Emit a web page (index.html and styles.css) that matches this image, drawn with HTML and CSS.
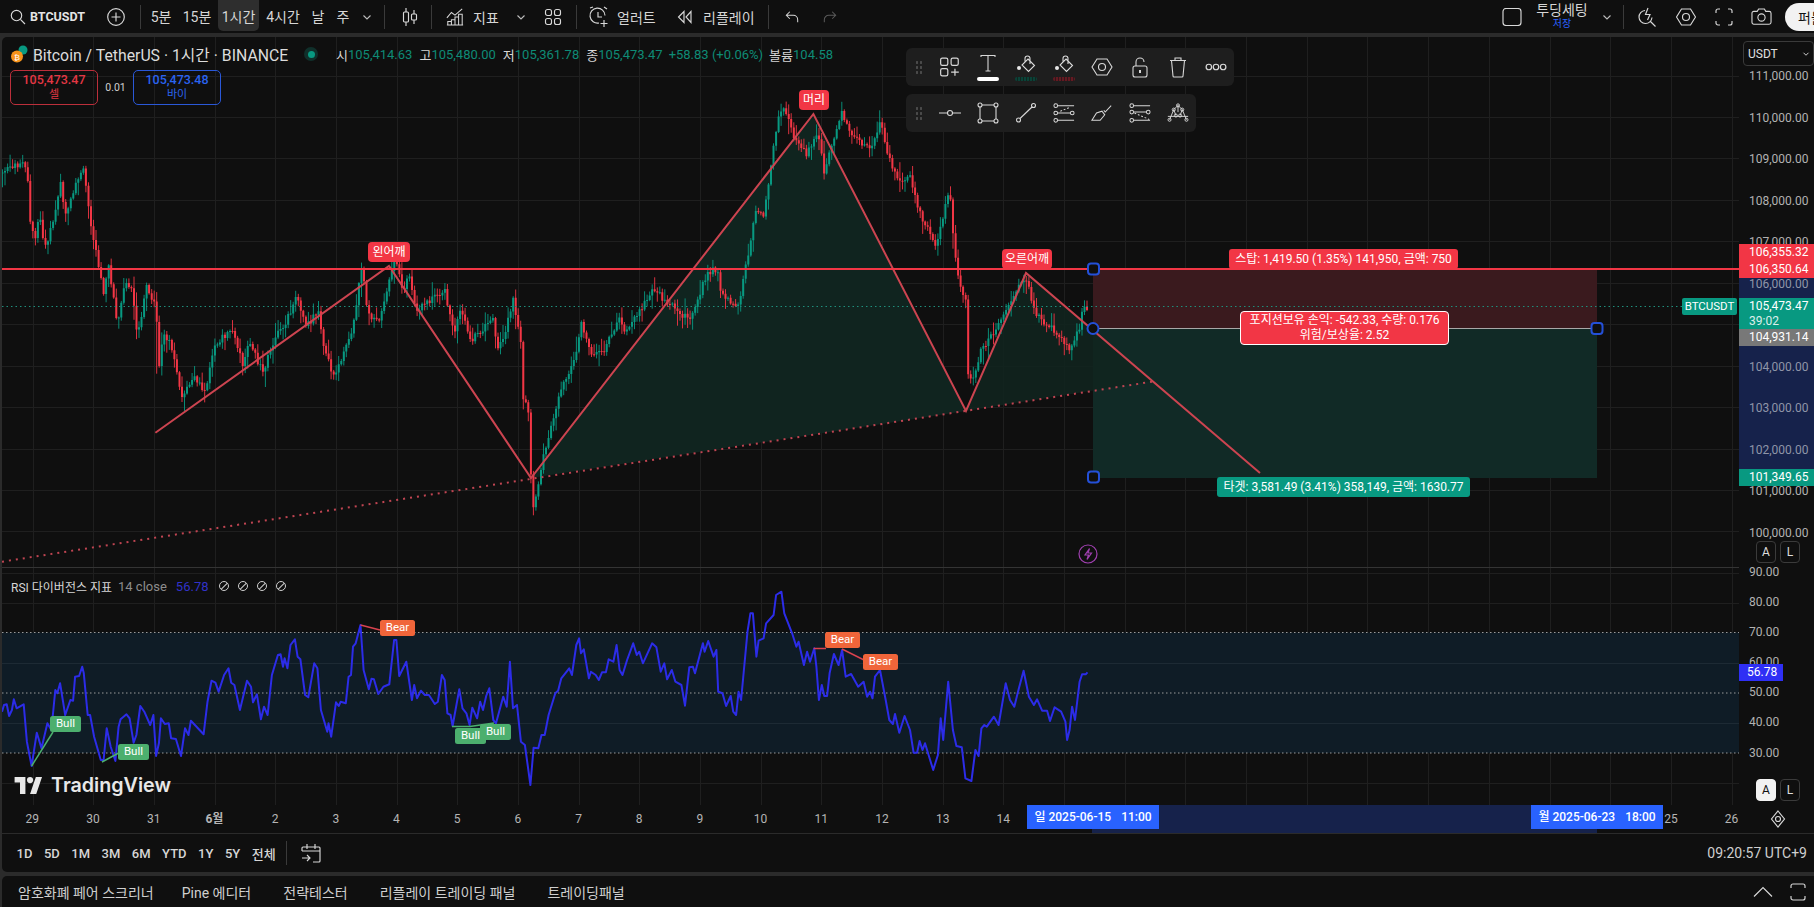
FILE: index.html
```html
<!DOCTYPE html>
<html lang="ko">
<head>
<meta charset="utf-8">
<title>BTCUSDT</title>
<link rel="stylesheet" href="styles.css">
</head>
<body>
<header class="topbar">
  <svg class="ico w16 ml10" viewBox="0 0 16 16"><circle cx="6.5" cy="6.5" r="5.2"/><path d="M10.4 10.4l4.6 4.6"/></svg>
  <span class="symbol">BTCUSDT</span>
  <svg class="ico w18 ml18" viewBox="0 0 18 18"><circle cx="9" cy="9" r="8.3"/><path d="M9 4.5v9M4.5 9h9"/></svg>
  <i class="vr ml15"></i>
  <button class="tf ml2 w36">5분</button>
  <button class="tf w36">15분</button>
  <button class="tf w41 ml3 active">1시간</button>
  <button class="tf w40 ml4">4시간</button>
  <button class="tf w26 ml2">날</button>
  <button class="tf w24">주</button>
  <svg class="chev ml6" viewBox="0 0 12 12"><path d="M2.5 4.5L6 8l3.5-3.5"/></svg>
  <i class="vr ml11"></i>
  <svg class="ico w16 ml17" viewBox="0 0 16 20"><path d="M4 1v4M4 15v4M12 3v4M12 13v4"/><rect x="1.5" y="5" width="5" height="10" rx="1"/><rect x="9.5" y="7" width="5" height="6" rx="1"/></svg>
  <i class="vr ml13"></i>
  <svg class="ico w18 ml14" viewBox="0 0 20 20"><path d="M1 11l5-6 4 3 8-7"/><path d="M2 19v-4h4v4M6 19v-6h4v6M10 19V10h4v9M14 19V7h4v12M1 19h18"/></svg>
  <span class="lbl w25 ml9">지표</span>
  <svg class="chev ml17" viewBox="0 0 12 12"><path d="M2.5 4.5L6 8l3.5-3.5"/></svg>
  <svg class="ico w18 ml17" viewBox="0 0 18 18"><rect x="1.5" y="1.5" width="6" height="6" rx="2"/><rect x="10.5" y="1.5" width="6" height="6" rx="2"/><rect x="1.5" y="10.5" width="6" height="6" rx="2"/><rect x="10.5" y="10.5" width="6" height="6" rx="2"/></svg>
  <i class="vr ml14"></i>
  <svg class="ico w20 ml12" viewBox="0 0 20 22"><path d="M16 9.5A7.5 7.5 0 1 0 10 17M9 6v5h4M1 2l3-1M15 1l3 2M15 14v7M11.5 17.5h7"/></svg>
  <span class="lbl w38 ml8">얼러트</span>
  <svg class="ico w16 ml22" viewBox="0 0 16 14"><path d="M7 1.5L1.500 7 7 12.500zM14 1.500L9 7l5 5.500z"/></svg>
  <span class="lbl w50 ml10">리플레이</span>
  <i class="vr ml15"></i>
  <svg class="ico w14 ml16" viewBox="0 0 16 16"><path d="M5.500 2L1.500 6l4 4M1.500 6h8a5 5 0 0 1 5 5v3"/></svg>
  <svg class="ico w14 ml24 dim" viewBox="0 0 16 16"><path d="M10.500 2l4 4-4 4M14.500 6h-8a5 5 0 0 0-5 5v3"/></svg>
  <svg class="ico w20 mlauto" viewBox="0 0 20 18"><rect x="1" y=".5" width="18" height="17" rx="3"/></svg>
  <div class="saved ml15"><span class="saved-name">투딩세팅</span><span class="saved-state">저장</span></div>
  <svg class="chev ml14" viewBox="0 0 12 12"><path d="M2.5 4.5L6 8l3.500-3.500"/></svg>
  <i class="vr ml10"></i>
  <svg class="ico w20 ml13" viewBox="0 0 20 20"><path d="M8 3.500a6.500 6.500 0 1 0 7 7M13 14l5.500 5.500M11 1L8.500 7.500H13L10.500 13"/></svg>
  <svg class="ico w20 ml19" viewBox="0 0 20 18"><path d="M5.500 1h9l5 8-5 8h-9l-5-8z"/><circle cx="10" cy="9" r="3.500"/></svg>
  <svg class="ico w18 ml19" viewBox="0 0 18 18"><path d="M1 5V3a2 2 0 0 1 2-2h2M13 1h2a2 2 0 0 1 2 2v2M17 13v2a2 2 0 0 1-2 2h-2M5 17H3a2 2 0 0 1-2-2v-2"/></svg>
  <svg class="ico w21 ml18" viewBox="0 0 22 18"><path d="M3 3.500h3.500L8 1h6l1.500 2.500H19a2 2 0 0 1 2 2V15a2 2 0 0 1-2 2H3a2 2 0 0 1-2-2V5.500a2 2 0 0 1 2-2z"/><circle cx="11" cy="10" r="3.800"/></svg>
  <button class="publish">퍼블</button>
</header>

<main class="chart">
  <div class="panes">
    <section class="pane-price">
      <div class="legend">
        <svg class="coin" viewBox="0 0 18 18"><circle cx="12" cy="5" r="4.500" fill="#089981"/><circle cx="6" cy="11.500" r="6" fill="#f7931a"/><text x="6" y="14.500" class="coin-b">₿</text></svg>
        <span class="title">Bitcoin / TetherUS · 1시간 · BINANCE</span>
        <span class="live"><i></i></span>
        <span class="k">시</span><span class="v">105,414.63</span>
        <span class="k sp">고</span><span class="v">105,480.00</span>
        <span class="k sp">저</span><span class="v">105,361.78</span>
        <span class="k sp">종</span><span class="v">105,473.47</span>
        <span class="v sp6">+58.83 (+0.06%)</span>
        <span class="k sp6">볼륨</span><span class="v">104.58</span>
      </div>
      <div class="trade">
        <div class="trade-btn sell"><b>105,473.47</b><span>셀</span></div>
        <span class="spread">0.01</span>
        <div class="trade-btn buy"><b>105,473.48</b><span>바이</span></div>
      </div>
    </section>
    <section class="pane-rsi">
      <div class="rsi-legend">
        <span class="rsi-name">RSI 다이버전스 지표</span>
        <span class="rsi-args">14 close</span>
        <span class="rsi-val">56.78</span>
        <span class="nulls"><i></i><i></i><i></i><i></i></span>
      </div>
    </section>
    <div class="time-axis">
      <span>29</span><span>30</span><span>31</span><span class="strong">6월</span><span>2</span><span>3</span><span>4</span><span>5</span><span>6</span><span>7</span><span>8</span><span>9</span><span>10</span><span>11</span><span>12</span><span>13</span><span>14</span><span></span><span></span><span>17</span><span>18</span><span>19</span><span>20</span><span>21</span><span>22</span><span></span><span></span><span>25</span><span>26</span>
    </div>
  </div>
  <aside class="axis">
    <div class="ticks-price">
      <span>111,000.00</span><span>110,000.00</span><span>109,000.00</span><span>108,000.00</span><span>107,000.00</span><span class="on-band">106,000.00</span><span></span><span class="on-band">104,000.00</span><span class="on-band">103,000.00</span><span class="on-band">102,000.00</span><span>101,000.00</span><span>100,000.00</span>
    </div>
    <div class="ticks-rsi">
      <span>90.00</span><span>80.00</span><span>70.00</span><span>60.00</span><span>50.00</span><span>40.00</span><span>30.00</span>
    </div>
  </aside>

  <svg id="canvas" class="canvas" viewBox="0 37 1814 796" xmlns="http://www.w3.org/2000/svg"></svg>

  <div class="axis-band"></div>
  <div class="usdt"><span>USDT</span><svg class="chev-s" viewBox="0 0 12 12"><path d="M3 4.500L6 7.500l3-3"/></svg></div>

  <span class="tag tag-left">왼어깨</span>
  <span class="tag tag-head">머리</span>
  <span class="tag tag-right">오른어깨</span>
  <span class="pos pos-stop">스탑: 1,419.50 (1.35%) 141,950, 금액: 750</span>
  <span class="pos pos-now">포지션보유 손익: -542.33, 수량: 0.176<br>위험/보상율: 2.52</span>
  <span class="pos pos-target">타겟: 3,581.49 (3.41%) 358,149, 금액: 1630.77</span>

  <span class="plabel p-a">106,355.32</span>
  <span class="plabel p-b">106,350.64</span>
  <span class="plabel p-c">105,473.47<em>39:02</em></span>
  <span class="plabel p-d">104,931.14</span>
  <span class="plabel p-e">101,349.65</span>
  <span class="plabel p-rsi">56.78</span>
  <span class="sym-tag">BTCUSDT</span>

  <span class="sig bull s1">Bull</span>
  <span class="sig bull s2">Bull</span>
  <span class="sig bull s3">Bull</span>
  <span class="sig bull s4">Bull</span>
  <span class="sig bear s5">Bear</span>
  <span class="sig bear s6">Bear</span>
  <span class="sig bear s7">Bear</span>

  <div class="tvlogo">
    <svg class="tvmark" viewBox="0 0 36 22"><path d="M14 22H7V7H0V0h14v22zM28 22h-8l7.500-22h8L28 22z"/><circle cx="20" cy="4" r="4"/></svg>
    <span>TradingView</span>
  </div>

  <svg class="bolt" viewBox="0 0 20 20"><circle cx="10" cy="10" r="9"/><path d="M11.500 4.500L7 11h3.500L9 15.500 13.500 9H10z"/></svg>
  <span class="al al1 al-a">A</span><span class="al al1 al-l">L</span>
  <span class="al al2 al-a on">A</span><span class="al al2 al-l">L</span>

  <div class="time-band"></div>
  <span class="time-tag t1">일 2025-06-15 <i>11:00</i></span>
  <span class="time-tag t2">월 2025-06-23 <i>18:00</i></span>
  <svg class="ico axis-gear" viewBox="0 0 16 18"><path d="M8 1l6.500 8L8 17 1.500 9z"/><circle cx="8" cy="9" r="2.500"/></svg>

  <div class="float float1">
    <span class="grip"></span>
    <span class="tool"><svg viewBox="0 0 20 20"><rect x="1.500" y="2" width="6.500" height="6.500" rx="1.500"/><rect x="11" y="2" width="6.500" height="6.500" rx="1.500"/><rect x="1.500" y="11.500" width="6.500" height="6.500" rx="1.500"/><path d="M14.500 11.500v6.500M11 14.750h7"/></svg></span>
    <span class="tool tool-up"><svg viewBox="0 0 20 22"><path d="M3 3V1.500h14V3M10 1.500V17M7.500 17h5"/></svg><i class="swatch white"></i></span>
    <span class="tool tool-up"><svg viewBox="0 0 22 22"><path d="M13 5l6.500 6.500-6 6L7 11zM10 8V4.500a2.500 2.500 0 0 1 5 0V10"/><circle cx="4" cy="14" r="2" class="solid"/></svg><i class="swatch green"></i></span>
    <span class="tool tool-up"><svg viewBox="0 0 22 22"><path d="M13 5l6.500 6.500-6 6L7 11zM10 8V4.500a2.500 2.500 0 0 1 5 0V10"/><circle cx="4" cy="14" r="2" class="solid"/></svg><i class="swatch red"></i></span>
    <span class="tool"><svg viewBox="0 0 22 20"><path d="M6 2h10l5 8-5 8H6l-5-8z"/><circle cx="11" cy="10" r="3.500"/></svg></span>
    <span class="tool"><svg viewBox="0 0 18 22"><rect x="2" y="10" width="14" height="11" rx="2"/><path d="M5 10V6a4 4 0 0 1 8 0"/><path d="M9 14v3" class="thick"/></svg></span>
    <span class="tool"><svg viewBox="0 0 18 22"><path d="M1 4.500h16M6 4.500V2h6v2.500M2.500 4.500L4 20a1 1 0 0 0 1 1h8a1 1 0 0 0 1-1l1.500-15.500"/></svg></span>
    <span class="tool"><svg viewBox="0 0 20 8"><circle cx="3.500" cy="4" r="2.500"/><circle cx="10" cy="4" r="2.500"/><circle cx="16.500" cy="4" r="2.500"/></svg></span>
  </div>
  <div class="float float2">
    <span class="grip"></span>
    <span class="tool"><svg viewBox="0 0 22 20"><path d="M0 10h8.500M13.500 10H22"/><circle cx="11" cy="10" r="2.500"/></svg></span>
    <span class="tool"><svg viewBox="0 0 22 20"><path d="M5 2h12M5 18h12M3 4v12M19 4v12"/><circle cx="3" cy="2" r="2"/><circle cx="19" cy="2" r="2"/><circle cx="3" cy="18" r="2"/><circle cx="19" cy="18" r="2"/></svg></span>
    <span class="tool"><svg viewBox="0 0 22 20"><path d="M5 15.500L17 4"/><circle cx="3.500" cy="17" r="2"/><circle cx="18.500" cy="2.500" r="2"/></svg></span>
    <span class="tool"><svg viewBox="0 0 24 20"><circle cx="3" cy="2" r="2"/><path d="M5 2h18M5 10h14M5 18h18" /><circle cx="3" cy="10" r="2"/><circle cx="21" cy="10" r="2"/><circle cx="3" cy="18" r="2"/><path d="M8 8l10-4" stroke-dasharray="2 2"/></svg></span>
    <span class="tool"><svg viewBox="0 0 24 20"><path d="M1 18h9l5-6-3-4-6 2-5 8zM14 7l1.500 2L22 2"/></svg></span>
    <span class="tool"><svg viewBox="0 0 24 20"><path d="M5 2h18M5 9h14M5 18h18"/><circle cx="3" cy="2" r="2"/><circle cx="3" cy="9" r="2"/><circle cx="21" cy="9" r="2"/><circle cx="3" cy="18" r="2"/><path d="M6 10l16 7" stroke-dasharray="2 2"/></svg></span>
    <span class="tool"><svg viewBox="0 0 26 22"><path d="M1 15h24M3 19l5-12 5-5 5 5 5 12M8 7l2.500 7M18 7l-2.500 7M13 2v8"/><circle cx="3" cy="19" r="1.800"/><circle cx="8" cy="7" r="1.800"/><circle cx="13" cy="2" r="1.800"/><circle cx="18" cy="7" r="1.800"/><circle cx="23" cy="19" r="1.800"/><circle cx="10.500" cy="14" r="1.800"/><circle cx="15.500" cy="14" r="1.800"/></svg></span>
  </div>
</main>

<footer class="rangebar">
  <button class="range">1D</button><button class="range">5D</button><button class="range">1M</button><button class="range">3M</button><button class="range">6M</button><button class="range">YTD</button><button class="range">1Y</button><button class="range">5Y</button><button class="range">전체</button>
  <i class="vr ml10"></i>
  <svg class="ico w20 ml14" viewBox="0 0 20 20"><path d="M1 8V5a1 1 0 0 1 1-1h16a1 1 0 0 1 1 1v13a1 1 0 0 1-1 1h-6M1 8h18M6 1v5M14 1v5M1 15h8M6 12l3 3-3 3"/></svg>
  <span class="clock">09:20:57 UTC+9</span>
</footer>

<nav class="tabs">
  <span class="tab-first">암호화폐 페어 스크리너</span><span>Pine 에디터</span><span>전략테스터</span><span>리플레이 트레이딩 패널</span><span>트레이딩패널</span>
  <svg class="ico w20 tabs-up" viewBox="0 0 20 12"><path d="M1 10.500l9-9 9 9"/></svg>
  <svg class="ico w16 tabs-max" viewBox="0 0 16 18"><path d="M1 5V3a2 2 0 0 1 2-2h10a2 2 0 0 1 2 2v2M15 13v2a2 2 0 0 1-2 2H3a2 2 0 0 1-2-2v-2"/></svg>
</nav>
<script src="app.js"></script>
</body>
</html>
```
FILE: styles.css
```css
* { box-sizing: border-box; }
html, body { margin: 0; height: 100%; overflow: hidden; }
body {
  width: 1814px; height: 907px; display: flex; flex-direction: column; gap: 4px;
  background: #2b2b2b; color: #d6d6d6;
  font: 14px Roboto, "Noto Sans CJK KR", sans-serif;
}
button { font: inherit; color: inherit; background: none; border: 0; padding: 0; }
svg { display: block; flex: none; }

.ico { fill: none; stroke: #d8d8d8; stroke-width: 1.15; }
.dim { stroke: #5b5b5b; }
.chev { width: 12px; height: 12px; fill: none; stroke: #bdbdbd; stroke-width: 1.1; }
.w14 { width: 14px; } .w16 { width: 16px; } .w18 { width: 18px; } .w20 { width: 20px; } .w21 { width: 21px; }
.ml2 { margin-left: 2px; } .ml3 { margin-left: 3px; } .ml4 { margin-left: 4px; } .ml6 { margin-left: 6px; }
.ml8 { margin-left: 8px; } .ml9 { margin-left: 9px; } .ml10 { margin-left: 10px; } .ml11 { margin-left: 11px; }
.ml12 { margin-left: 12px; } .ml13 { margin-left: 13px; } .ml14 { margin-left: 14px; } .ml15 { margin-left: 15px; }
.ml16 { margin-left: 16px; } .ml17 { margin-left: 17px; } .ml18 { margin-left: 18px; } .ml19 { margin-left: 19px; }
.ml22 { margin-left: 22px; } .ml24 { margin-left: 24px; }
.mlauto { margin-left: auto; }
.vr { display: block; width: 1px; height: 24px; background: #3a3a3a; flex: none; }

.topbar { height: 33px; flex: none; display: flex; align-items: center; background: #0f0f0f; }
.symbol { margin-left: 4px; width: 59px; font-weight: 700; font-size: 12.5px; color: #e4e4e4; white-space: nowrap; }
.tf { height: 31px; margin-bottom: 2px; text-align: center; border-radius: 0 0 5px 5px; white-space: nowrap; }
.tf.active { background: #2e2e2e; }
.w24 { width: 24px; } .w25 { width: 25px; } .w26 { width: 26px; } .w36 { width: 36px; }
.w38 { width: 38px; } .w40 { width: 40px; } .w41 { width: 41px; } .w50 { width: 50px; }
.lbl { white-space: nowrap; flex: none; }
.saved { width: 50px; display: flex; flex-direction: column; align-items: center; line-height: 12px; }
.saved-name { white-space: nowrap; height: 14px; margin-top: 1px; }
.saved-state { font-size: 10px; color: #2962ff; }
.publish { width: 60px; height: 28px; margin: 0 -31px 0 13px; background: #f2f2f2; color: #111; border-radius: 14px 0 0 14px; text-align: left; padding-left: 13px; white-space: nowrap; flex: none; overflow: hidden; }

.chart { position: relative; height: 796px; flex: none; margin-left: 2px; display: flex; background: #0f0f0f; border-radius: 5px 0 0 0; overflow: hidden; font-size: 12px; }
.panes { width: 1737px; display: flex; flex-direction: column; position: relative; z-index: 1; }
.pane-price { height: 530px; }
.pane-rsi { height: 239px; padding-top: 10px; border-top: 1px solid #343434; }
.legend { display: flex; align-items: center; height: 22px; margin-top: 6px; padding-left: 9px; font-size: 13px; white-space: nowrap; }
.coin { width: 18px; height: 18px; }
.coin-b { font-size: 8px; fill: #fff; text-anchor: middle; }
.title { margin-left: 4px; width: 257px; font-size: 15.8px; color: #dcdcdc; }
.live { width: 14px; height: 14px; margin-left: 14px; border-radius: 50%; background: #10302b; display: grid; place-items: center; }
.live i { width: 7px; height: 7px; border-radius: 50%; background: #089981; }
.k { color: #d6d6d6; font-size: 13px; }
.live + .k { margin-left: 18px; }
.v { color: #0e8b76; }
.sp { margin-left: 7px; }
.sp6 { margin-left: 6px; }
.trade { display: flex; align-items: center; margin: 5px 0 0 8px; }
.trade-btn { width: 88px; height: 35px; border: 1px solid; border-radius: 5px; display: flex; flex-direction: column; align-items: center; line-height: 15px; padding-top: 1px; font-size: 11px; }
.trade-btn b { font-size: 12.5px; font-weight: 500; }
.sell { border-color: #bc2f3b; color: #e33744; }
.buy { border-color: #2a58d8; color: #2a63f0; }
.spread { width: 35px; text-align: center; font-size: 10.5px; color: #cfcfcf; }
.rsi-legend { display: flex; align-items: center; padding-left: 9px; height: 16px; white-space: nowrap; }
.rsi-args { margin-left: 6px; color: #8d8d8d; font-size: 13px; }
.rsi-val { margin-left: 9px; color: #3232c8; font-size: 13px; }
.nulls { display: flex; gap: 9px; margin-left: 10px; }
.nulls i { position: relative; width: 10px; height: 10px; border: 1.2px solid #cfcfcf; border-radius: 50%; overflow: hidden; }
.nulls i::after { content: ""; position: absolute; left: 3px; top: -2px; width: 1.2px; height: 14px; background: #cfcfcf; transform: rotate(45deg); }

.time-axis { height: 27px; display: flex; color: #b5b5b5; font-size: 12px; line-height: 27px; }
.time-axis span { flex: none; width: 60.7px; text-align: center; }
.time-axis .strong { font-weight: 700; }

.axis { width: 75px; flex: none; padding-left: 10px; position: relative; z-index: 3; color: #b2b2b2; display: flex; flex-direction: column; }
.ticks-price { padding-top: 19px; height: 530px; overflow: hidden; display: flex; flex-direction: column; }
.ticks-price span { flex: none; height: 41.5px; line-height: 41.5px; }
.ticks-price .on-band { color: #8f95a8; }
.ticks-rsi { margin-top: -11px; padding-top: 1px; display: flex; flex-direction: column; }
.ticks-rsi span { flex: none; height: 30.1px; line-height: 30.1px; }

.canvas { position: absolute; left: -2px; top: 0; width: 1814px; height: 796px; z-index: 0; pointer-events: none; }
.axis-band { position: absolute; z-index: 2; left: 1737px; right: 0; top: 241px; height: 199px; background: #16224b; }
.usdt { position: absolute; z-index: 5; left: 1741px; top: 4px; width: 71px; height: 25px; display: flex; align-items: center; justify-content: space-between; padding: 0 2px 0 4px; border: 1px solid #3a3a3a; border-radius: 4px; color: #e0e0e0; background: #0f0f0f; }
.chev-s { width: 10px; height: 10px; fill: none; stroke: #ccc; stroke-width: 1.2; }

.tag { position: absolute; z-index: 5; height: 20px; line-height: 20px; text-align: center; color: #fff; background: #f23645; border-radius: 4px; white-space: nowrap; }
.tag-left { left: 366px; top: 205px; width: 42px; }
.tag-head { left: 797px; top: 53px; width: 30px; }
.tag-right { left: 1000px; top: 212px; width: 50px; }
.pos { position: absolute; z-index: 5; color: #fff; text-align: center; white-space: nowrap; border-radius: 3px; }
.pos-stop { left: 1227px; top: 212px; width: 229px; height: 20px; line-height: 20px; background: #f23645; }
.pos-now { left: 1238px; top: 274px; width: 209px; height: 34px; line-height: 15px; padding-top: 1px; background: #f23645; border: 1px solid #fff; border-radius: 4px; }
.pos-target { left: 1215px; top: 440px; width: 253px; height: 20px; line-height: 20px; background: #089981; }

.plabel { position: absolute; z-index: 5; left: 1737px; right: 0; padding-left: 10px; height: 17px; line-height: 17px; color: #fff; white-space: nowrap; }
.plabel em { display: block; font-style: normal; line-height: 13px; opacity: .85; }
.p-a { top: 207px; background: #f23645; }
.p-b { top: 224px; background: #f23645; }
.p-c { top: 261px; height: 31px; background: #089981; }
.p-d { top: 292px; background: #787878; }
.p-e { top: 432px; background: #089981; }
.plabel.p-rsi { top: 627px; right: auto; width: 44px; background: #2f2ff5; padding-left: 8px; }
.sym-tag { position: absolute; z-index: 5; left: 1680px; top: 261px; width: 55px; height: 17px; line-height: 17px; text-align: center; color: #fff; background: #089981; border-radius: 2px; font-size: 11.5px; }

.sig { position: absolute; z-index: 5; width: 31px; height: 16px; line-height: 15px; text-align: center; color: #fff; border-radius: 2.5px; font-size: 11.5px; }
.bull { background: #4caf6e; }
.bear { background: #f0653a; width: 35px; }
.s1 { left: 48px; top: 679px; }
.s2 { left: 116px; top: 707px; }
.s3 { left: 453px; top: 691px; }
.s4 { left: 478px; top: 687px; }
.s5 { left: 378px; top: 583px; }
.s6 { left: 823px; top: 595px; }
.s7 { left: 861px; top: 617px; }

.tvlogo { position: absolute; z-index: 5; left: 12px; top: 738px; display: flex; align-items: center; gap: 8px; color: #e8e8e8; font: 600 19.7px Inter, sans-serif; line-height: 20px; }
.tvmark { width: 29px; height: 17px; fill: #e8e8e8; }

.bolt { position: absolute; z-index: 5; left: 1076px; top: 507px; width: 20px; height: 20px; fill: none; stroke: #a040b0; stroke-width: 1.2; }
.al { position: absolute; z-index: 5; width: 20px; height: 22px; line-height: 20px; text-align: center; border: 1px solid #3b3b3b; border-radius: 4px; color: #ddd; }
.al1 { top: 504px; }
.al2 { top: 742px; }
.al-a { left: 1754px; }
.al-l { left: 1778px; }
.al.on { background: #f2f2f2; color: #111; border-color: #f2f2f2; }

.time-band { position: absolute; z-index: 1; left: 1090px; top: 768px; width: 505px; height: 28px; background: #16224b; }
.time-tag { position: absolute; z-index: 5; top: 768px; width: 132px; height: 24px; line-height: 24px; text-align: center; color: #fff; background: #2962ff; white-space: nowrap; font-weight: 500; }
.time-tag i { font-style: normal; margin-left: 7px; }
.t1 { left: 1025px; }
.t2 { left: 1529px; }
.axis-gear { position: absolute; z-index: 5; left: 1768px; top: 773px; width: 16px; height: 18px; }

.float { position: absolute; z-index: 6; left: 904px; height: 38px; display: flex; align-items: center; background: #1e1e1e; border-radius: 6px; padding-left: 9px; }
.float1 { top: 11px; width: 328px; }
.float2 { top: 57px; width: 290px; }
.grip { width: 7px; height: 14px; flex: none; margin-right: 8.5px; background: radial-gradient(circle, #4b4b4b 1.1px, transparent 1.3px) 0 0 / 4px 5px; }
.tool { width: 38px; height: 38px; position: relative; display: grid; place-items: center; flex: none; }
.tool svg { width: 22px; height: 22px; fill: none; stroke: #d8d8d8; stroke-width: 1.1; }
.tool-up svg { margin-top: -5px; }
.tool .solid { fill: #e8e8e8; stroke: none; }
.tool .thick { stroke-width: 2; }
.swatch { position: absolute; left: 8px; bottom: 5px; width: 22px; height: 4px; border-radius: 2px; }
.white { background: #fff; }
.green { background: repeating-linear-gradient(90deg, #0a4238 0 2px, #10261f 2px 3px); }
.red { background: repeating-linear-gradient(90deg, #641a22 0 2px, #33161a 2px 3px); }

.rangebar { height: 39px; flex: none; margin: -4px 0 0 2px; display: flex; align-items: center; padding-left: 3px; background: #0f0f0f; border-top: 1px solid #2b2b2b; border-radius: 0 0 0 5px; font-size: 13px; position: relative; z-index: 7; }
.range { margin-left: 11.5px; flex: none; white-space: nowrap; font-weight: 500; }
.clock { margin-left: auto; margin-right: 7px; font-size: 14px; color: #cfcfcf; }
.tabs { height: 31px; flex: none; margin-left: 2px; display: flex; align-items: center; gap: 32px; padding-left: 16px; background: #0f0f0f; border-radius: 5px 0 0 0; white-space: nowrap; color: #cfcfcf; }
.tab-first { margin-right: -4px; }
.tabs-up { margin-left: auto; height: 12px; }
.tabs-max { height: 18px; margin-left: -15px; margin-right: 8px; }
```
FILE: app.js
```js
(function () {
  var NS = 'http://www.w3.org/2000/svg';
  var svg = document.getElementById('canvas');
  var seed = 20250615;
  function rnd() { seed = (seed * 1664525 + 1013904223) >>> 0; return seed / 4294967296; }

  function add(tag, attrs) {
    var el = document.createElementNS(NS, tag);
    for (var k in attrs) el.setAttribute(k, attrs[k]);
    svg.appendChild(el);
    return el;
  }
  function path(d, stroke, w, extra) {
    var a = { d: d, stroke: stroke, 'stroke-width': w, fill: 'none' };
    for (var k in extra || {}) a[k] = extra[k];
    return add('path', a);
  }
  function poly(p) { return 'M' + p.map(function (q) { return q[0].toFixed(1) + ' ' + q[1].toFixed(1); }).join('L'); }

  var DAY = 60.68, X0 = 32.5, RIGHT = 1739;
  var g = '';
  for (var i = 0; i < 29; i++) { var x = Math.round(X0 + i * DAY) + 0.5; g += 'M' + x + ' 37V805'; }
  for (var p = 0; p < 12; p++) { var y = Math.round(75.5 + p * 41.45) + 0.5; g += 'M2 ' + y + 'H' + RIGHT; }
  for (var r = 0; r < 8; r++) { if (r === 2 || r === 4 || r === 6) continue; var yy = Math.round(572.6 + r * 30.1) + 0.5; g += 'M2 ' + yy + 'H' + RIGHT; }
  path(g, '#1f1f1f', 1);

  add('rect', { x: 2, y: 632.5, width: RIGHT - 2, height: 120.5, fill: '#0f1c26' });
  path('M2 723.5H' + RIGHT + 'M2 663.5H' + RIGHT, '#1d2a34', 1);
  [632.5, 693, 753].forEach(function (yd) { path('M2 ' + yd + 'H' + RIGHT, '#9a9a9a', 1, { 'stroke-dasharray': '1.5 2.5' }); });

  add('rect', { x: 1093, y: 269, width: 504, height: 59, fill: '#3a1a1e' });
  add('rect', { x: 1093, y: 328, width: 504, height: 150, fill: '#112a26' });
  add('polygon', { points: '531,478 813,114 966,411', fill: '#10241f' });
  add('polygon', { points: '966,411 1026,273 1152,381', fill: '#10241f', 'fill-opacity': .85 });

  var a9 = [[6,100],[40,70],[75,80],[85,240],[100,290],[110,220],[125,320],[150,250],[170,135],[185,230],[215,120],[235,85],[250,230],[265,310],[290,460],[305,380],[330,560],[350,420],[370,450],[385,590],[410,440],[438,510],[442,695],[460,575],[480,620],[510,780],[540,705],[575,755],[600,610],[650,575],[680,670],[700,600],[735,700],[770,590],[795,560],[830,470],[860,560],[890,510],[905,610],[935,710],[985,570],[1015,375],[1030,530],[1065,540],[1105,360],[1130,450],[1145,410],[1165,510],[1245,445],[1270,580],[1290,500],[1320,600],[1380,540],[1395,625],[1415,575],[1437,480],[1460,620],[1465,770],[1480,810],[1490,1120]]
    .map(function (q) { return [q[0] / 2.8, 140 + q[1] / 3]; });
  var a8 = [[545,1100],[560,1020],[585,890],[615,810],[630,700],[650,790],[680,790],[715,680],[730,730],[790,600],[830,640],[870,690],[915,545],[935,540],[940,610],[980,660],[1000,520],[1020,370],[1040,370],[1070,90],[1085,60],[1110,150],[1135,195],[1160,120],[1175,250],[1190,170],[1215,60],[1230,130],[1280,175],[1300,95],[1320,210],[1345,280],[1365,250],[1385,360],[1425,470],[1455,295],[1465,470],[1480,600],[1492,630],[1495,860],[1510,870],[1525,780],[1565,705]]
    .map(function (q) { return [300 + q[0] / 2.24, 90 + q[1] / 3]; });
  var a0 = [[1007,312],[1012,295],[1026,278],[1035,312],[1047,324],[1064,341],[1069.5,347],[1079,330],[1082,310],[1088,306]];
  var trace = a9.concat(a8, a0);

  function at(xq) {
    for (var i = 1; i < trace.length; i++) {
      if (xq <= trace[i][0]) {
        var a = trace[i - 1], b = trace[i], t = (xq - a[0]) / Math.max(0.01, b[0] - a[0]);
        return a[1] + (b[1] - a[1]) * t;
      }
    }
    return trace[trace.length - 1][1];
  }
  var STEP = 2.528, prev = at(2.5), up = '', dn = '', wu = '', wd = '';
  for (var c = 0; c * STEP + 2.5 < 1088; c++) {
    var cx = 2.5 + c * STEP, close = at(cx) + (rnd() - 0.5) * 7;
    var hi = Math.min(prev, close) - rnd() * rnd() * 16 - 1, lo = Math.max(prev, close) + rnd() * rnd() * 16 + 1;
    trace.forEach(function (q) {
      if (Math.abs(q[0] - cx) < STEP / 2) { hi = Math.min(hi, q[1] - 2); lo = Math.max(lo, q[1] + 2); }
    });
    var top = Math.min(prev, close), h = Math.max(1, Math.abs(prev - close));
    var body = 'M' + (cx - 1).toFixed(1) + ' ' + top.toFixed(1) + 'h2v' + h.toFixed(1) + 'h-2z';
    var wick = 'M' + cx.toFixed(1) + ' ' + hi.toFixed(1) + 'V' + lo.toFixed(1);
    if (close < prev) { up += body; wu += wick; } else { dn += body; wd += wick; }
    prev = close;
  }
  path(wu, '#089981', 0.9);
  path(wd, '#f23645', 0.9);
  add('path', { d: up, fill: '#089981' });
  add('path', { d: dn, fill: '#f23645' });

  path('M2 306.5H1739', '#1f8f7c', 1, { 'stroke-dasharray': '1.5 3' });
  path('M2 561.7L1152 381.7', '#c04552', 2, { 'stroke-dasharray': '2 5' });
  path('M155.4 432.7L389 266L531 478L813.4 114L966 411L1026 273L1260 473', '#cc4450', 2, { 'stroke-linejoin': 'miter' });
  path('M2 269H1739', '#f23645', 2);
  path('M1093 328.5H1597', '#a8a8a8', 1.2);

  [[1093.5, 269, 'r'], [1093, 328.5, 'c'], [1597, 328.5, 'r'], [1093.5, 477, 'r']].forEach(function (h) {
    add('rect', { x: h[0] - 5.5, y: h[1] - 5.5, width: 11, height: 11, rx: h[2] === 'c' ? 5.5 : 3, fill: '#0f0f0f', stroke: '#2450d8', 'stroke-width': 2 });
  });

  var r5 = [[5,455],[10,435],[17,433],[23,468],[30,450],[35,418],[42,445],[60,433],[68,545],[80,618],[93,518],[105,565],[120,490],[130,510],[140,390],[145,400],[152,370],[165,465],[178,420],[185,422],[190,350],[200,348],[208,320],[212,340],[222,465],[228,465],[238,530],[255,600],[262,600],[270,505],[280,560],[292,603],[300,500],[305,478],[320,463],[328,475],[338,548],[345,525],[355,438],[365,455],[380,495],[388,465],[395,588],[402,550],[407,475],[417,492],[427,490],[433,535],[445,537],[458,588],[468,505],[477,525],[483,482],[515,523],[525,425],[535,362],[545,368],[553,395],[567,345],[578,325],[585,368],[593,375],[607,450],[625,362],[635,380],[640,427],[650,403],[660,478],[668,440],[677,465],[688,345],[703,285],[710,283],[716,320],[720,295],[727,325],[735,255],[746,238],[753,290],[760,298],[772,405],[780,412],[795,310],[803,325],[812,450],[828,515],[831,490],[838,530],[850,427],[857,438],[862,425],[875,430],[882,350],[888,345],[893,260],[900,250],[912,195],[920,330],[933,388],[940,356],[946,358],[957,402],[970,380],[985,373],[997,240],[1003,240],[1010,348],[1028,305],[1042,420],[1048,375],[1055,415],[1065,392],[1075,405],[1085,405],[1100,432],[1108,425],[1118,345],[1125,360],[1132,460],[1140,465],[1145,498],[1162,388],[1170,445],[1180,460],[1188,495],[1195,443],[1207,475],[1215,425],[1222,450],[1230,408],[1238,385],[1248,480],[1255,490],[1273,410],[1282,440],[1290,305],[1298,445],[1308,435],[1318,545],[1328,555],[1342,675],[1350,563],[1362,565],[1370,525],[1378,525],[1388,465],[1405,400],[1412,392],[1420,355],[1440,325],[1447,345],[1458,255],[1465,235],[1470,280],[1477,268],[1490,355],[1495,335],[1507,345],[1515,360],[1523,337],[1533,337],[1540,298],[1552,305],[1560,255]]
    .map(function (q) { return [q[0] / 2.53, 560 + q[1] / 3]; });
  var r10 = [[167,330],[175,345],[188,300],[205,250],[215,285],[222,275],[232,310],[258,250],[270,262],[282,335],[292,310],[300,358],[313,330],[323,365],[340,375],[350,437],[362,322],[372,320],[378,340],[400,250],[405,275],[415,243],[430,290],[438,270],[443,395],[455,400],[465,438],[478,408],[485,455],[493,465],[500,395],[507,420],[525,215],[533,160],[540,160],[550,290],[556,242],[570,235],[577,190],[598,165],[605,105],[620,95],[628,160],[650,220],[662,260],[668,245],[683,315],[692,275],[700,305],[712,265],[718,320],[725,420],[733,375],[740,408],[748,408],[755,340],[767,282],[780,315],[790,270],[800,350],[815,342],[835,380],[850,365],[860,410],[868,395],[875,415],[882,350],[896,330],[912,420],[922,480],[932,492],[938,462],[950,518],[965,468],[980,510],[990,578],[1000,578],[1007,543],[1015,570],[1022,550],[1045,630],[1058,585],[1066,475],[1073,540],[1087,365],[1100,510],[1110,558],[1125,562],[1135,655],[1152,663],[1163,570],[1172,588],[1180,505],[1188,495],[1195,500],[1215,470],[1228,495],[1248,370],[1260,420],[1272,440],[1285,385],[1298,332],[1313,410],[1327,435],[1336,418],[1350,452],[1364,452],[1372,483],[1385,442],[1403,455],[1415,485],[1420,540],[1427,510],[1434,440],[1442,480],[1455,365],[1462,343],[1472,343],[1477,337]]
    .map(function (q) { return [560 + q[0] / 2.8, 560 + q[1] / 3]; });
  path(poly(r5.concat(r10)), '#2c2ce8', 2, { 'stroke-linejoin': 'round' });

  var BULL = '#4caf6e', BEAR = '#d9434f';
  path('M31.6 766L53 732', BULL, 1.5);
  path('M102 762L118.6 753', BULL, 1.5);
  path('M452 726.5H470L494 723', BULL, 1.5);
  path('M360.5 625L380 630', BEAR, 1.5);
  path('M813.6 648.5H826', BEAR, 1.5);
  path('M842 649L864 660', BEAR, 1.5);
})();
```
